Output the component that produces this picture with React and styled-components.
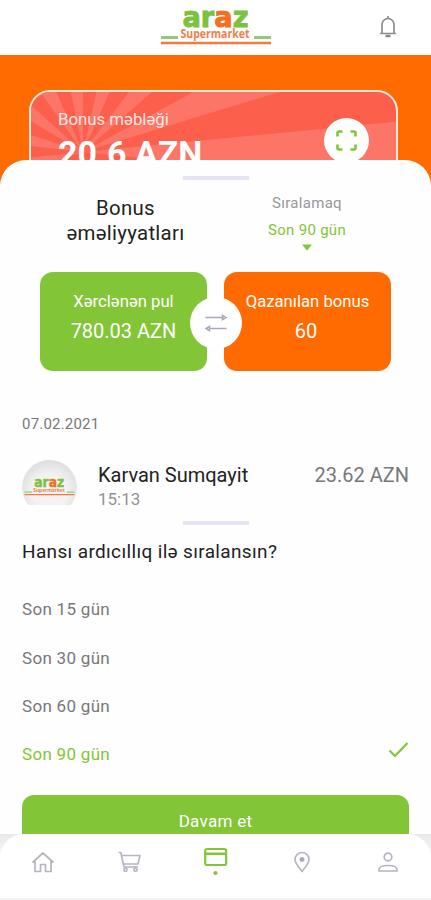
import React from "react";
import styled, { createGlobalStyle } from "styled-components";

const GREEN = "#82c536";
const ORANGE = "#ff6b00";

const GlobalStyle = createGlobalStyle`
  * {
    box-sizing: border-box;
  }

  body {
    margin: 0;
    background-color: #fff;
    font-family: Roboto, "Liberation Sans", sans-serif;
  }
`;

const Screen = styled.div`
  width: 431px;
  height: 900px;
  display: flex;
  flex-direction: column;
  background-color: #fefefe;
  overflow: hidden;
`;

const Header = styled.header`
  height: 55px;
  flex-shrink: 0;
  display: grid;
  grid-template-columns: 1fr 112px 1fr;
  align-items: start;
  background-color: #fff;

  .logo {
    grid-column: 2;
  }

  .bell {
    justify-self: end;
    margin: 15px 33px 0 0;
  }
`;

const Hero = styled.section`
  height: 145px;
  flex-shrink: 0;
  padding: 35px 33px 0 29px;
  background-color: ${ORANGE};
`;

const BonusCard = styled.div`
  position: relative;
  height: 110px;
  display: flex;
  justify-content: space-between;
  padding: 17px 27px 0 27px;
  border: 2px solid #ffe9dc;
  border-radius: 21px;
  color: #fff;
  background-color: #fc5f4b;
  overflow: hidden;

  .rays {
    position: absolute;
    top: 0;
    left: 0;
  }
`;

const BonusText = styled.div`
  position: relative;
  display: flex;
  flex-direction: column;

  .label {
    font-size: 16.8px;
    line-height: 20px;
    color: #ffe6e1;
  }

  .amount {
    margin-top: 5px;
    font-size: 34px;
    font-weight: 700;
    line-height: 38px;
  }
`;

const ScanButton = styled.div`
  position: relative;
  width: 45px;
  height: 45px;
  margin-top: 9px;
  display: flex;
  align-items: center;
  justify-content: center;
  border-radius: 50%;
  background-color: #fff;
`;

const Sheet = styled.main`
  position: relative;
  flex: 1;
  min-height: 0;
  margin-top: -40px;
  padding-top: 16px;
  display: flex;
  flex-direction: column;
  border-radius: 26px 26px 0 0;
  background-color: #fefefe;
`;

const Handle = styled.div`
  width: 66px;
  height: 4px;
  flex-shrink: 0;
  margin: ${(props) => props.$top || 0}px auto 0;
  background-color: #e4e4f3;
`;

const Summary = styled.div`
  display: grid;
  grid-template-columns: 166px 166px;
  column-gap: 17px;
  justify-content: center;
  height: 92px;
  flex-shrink: 0;
  padding-top: 15px;
  text-align: center;
`;

const Title = styled.h1`
  margin: 0;
  padding: 1px 0 0 3px;
  font-size: 20.4px;
  font-weight: 400;
  line-height: 25px;
  letter-spacing: 0.3px;
  color: #222;
`;

const Sort = styled.div`
  display: flex;
  flex-direction: column;
  align-items: center;
  font-size: 15px;
  letter-spacing: 0.3px;
  color: #97979b;

  .label {
    line-height: 18px;
    margin-top: -1px;
  }

  .value {
    margin-top: 8px;
    line-height: 20px;
    color: ${GREEN};
  }

  svg {
    margin-top: 4px;
  }
`;

const Totals = styled.div`
  position: relative;
  display: grid;
  grid-template-columns: 167px 167px;
  column-gap: 17px;
  justify-content: center;
`;

const Total = styled.div`
  height: 99px;
  display: flex;
  flex-direction: column;
  align-items: center;
  padding-top: 20px;
  border-radius: 13px;
  color: #fff;
  background-color: ${(props) => props.color};

  .label {
    font-size: 16.7px;
    line-height: 20px;
  }

  .value {
    margin-top: 7px;
    padding-right: ${(props) => props.$shift || 0}px;
    font-size: 20px;
    line-height: 24px;
  }
`;

const Swap = styled.div`
  position: absolute;
  top: 25px;
  left: 190px;
  width: 52px;
  height: 52px;
  display: flex;
  align-items: center;
  justify-content: center;
  border-radius: 50%;
  background-color: #fff;
`;

const DateLabel = styled.div`
  margin: 44px 0 0 22px;
  font-size: 15px;
  line-height: 18px;
  letter-spacing: 0.2px;
  color: #77777a;
`;

const Operation = styled.div`
  height: 46px;
  flex-shrink: 0;
  margin: 27px 22px 0;
  display: flex;
  align-items: flex-start;

  .info {
    flex: 1;
    margin: 3px 0 0 21px;
  }

  .store {
    font-size: 20px;
    line-height: 24px;
    color: #222;
  }

  .time {
    font-size: 17px;
    line-height: 24px;
    color: #929296;
  }

  .price {
    margin-top: 3px;
    font-size: 20px;
    line-height: 24px;
    color: #77777a;
  }
`;

const Avatar = styled.div`
  width: 55px;
  height: 45px;
  overflow: hidden;

  div {
    width: 55px;
    height: 55px;
    padding: 15px 2px 0;
    border-radius: 50%;
    background: radial-gradient(circle at 50% 58%, #f3f3f3 40%, #dcdcdc 78%);
  }

  svg {
    display: block;
  }
`;

const Question = styled.h2`
  margin: 15px 0 0 22px;
  font-size: 19px;
  font-weight: 400;
  line-height: 24px;
  letter-spacing: 0.35px;
  color: #222;
`;

const Options = styled.ul`
  margin: 21px 0 0;
  padding: 0 22px;
  list-style: none;
`;

const Option = styled.li`
  height: 48.4px;
  display: flex;
  align-items: center;
  justify-content: space-between;
  font-size: 17px;
  letter-spacing: 0.3px;
  color: ${(props) => (props.$selected ? GREEN : "#77777a")};

  svg {
    margin-top: -9px;
  }
`;

const Submit = styled.button`
  width: 387px;
  height: 50px;
  flex-shrink: 0;
  margin: 16px auto 0;
  padding: 2px 0 0;
  border: 0;
  border-radius: 12px;
  font-family: inherit;
  font-size: 17px;
  letter-spacing: 0.3px;
  color: #fff;
  background-color: ${GREEN};
`;

const BottomBar = styled.nav`
  position: relative;
  height: 66px;
  flex-shrink: 0;
  background: linear-gradient(#e9e9ea, #f8f8f8 22px);
`;

const Tabs = styled.div`
  height: 65px;
  display: grid;
  grid-template-columns: repeat(5, 1fr);
  justify-items: center;
  align-items: start;
  padding-top: 13px;
  border-radius: 24px 24px 0 0;
  border-bottom: 1px solid #f1f1f1;
  background-color: #fff;
`;

const Logo = ({ width, height, className }) => (
  <svg
    className={className}
    width={width}
    height={height}
    viewBox="0 -6 112 46"
    overflow="visible"
  >
    <text
      x="22.500"
      y="20.500"
      textLength="66"
      lengthAdjust="spacingAndGlyphs"
      fontFamily="DejaVu Sans, sans-serif"
      fontWeight="700"
      fontSize="29"
      fill="#7cc142"
      stroke="#7cc142"
      strokeWidth="1"
    >
      ar<tspan fill="#f37021" stroke="#f37021">a</tspan>z
    </text>
    <text
      x="20.500"
      y="31.500"
      textLength="69"
      lengthAdjust="spacingAndGlyphs"
      fontFamily="Open Sans, sans-serif"
      fontWeight="700"
      fontSize="11.500"
      fill="#f0804a"
    >
      Supermarket
    </text>
    <path d="M1 31.500h17M94 31.500h17" stroke="#93c97a" strokeWidth="3" />
    <path d="M1 37h110" stroke="#f27a3c" strokeWidth="2.400" />
  </svg>
);

const rayAngles = [-6, 17, 41, 66, 90, 114, 138, 162, 186];

const rayPoints = (angle) => {
  const cx = 52;
  const cy = 60;
  const point = (deg) => {
    const rad = (deg * Math.PI) / 180;
    return `${cx + 600 * Math.cos(rad)},${cy - 600 * Math.sin(rad)}`;
  };
  return `${cx},${cy} ${point(angle)} ${point(angle + 11.5)}`;
};

const Rays = () => (
  <svg className="rays" width="366" height="108">
    {rayAngles.map((angle) => (
      <polygon key={angle} points={rayPoints(angle)} fill="#fd7566" />
    ))}
  </svg>
);

const BellIcon = () => (
  <svg
    className="bell"
    width="20"
    height="24"
    viewBox="0 0 20 24"
    fill="none"
    stroke="#8d8d90"
    strokeWidth="1.700"
  >
    <path d="M2 18.500h16M4 18V9.500a6 6 0 0 1 12 0V18M10 1v2.500" />
    <path d="M8.300 20.500h3.400v.8h-3.400z" />
  </svg>
);

const ScanIcon = () => (
  <svg width="21" height="21" fill="none" stroke={GREEN} strokeWidth="2.600">
    <path d="M1.500 6.500V3q0-1.500 1.500-1.500h3.500M14.500 1.500H18q1.500 0 1.500 1.500v3.500M19.500 14.500V18q0 1.500-1.500 1.500h-3.500M6.500 19.500H3q-1.500 0-1.500-1.500v-3.500" />
  </svg>
);

const SwapIcon = () => (
  <svg width="24" height="18" fill="none" stroke="#a9a9bd" strokeWidth="1.500">
    <path d="M1.500 3.500h18M18.500 1.300L22 3.500l-3.500 2.200zM22.500 14.500H5M5.500 12.300L2 14.500l3.500 2.200z" />
  </svg>
);

const iconProps = {
  width: 26,
  height: 30,
  viewBox: "0 0 26 30",
  fill: "none",
  stroke: "#b4b6c2",
  strokeWidth: 1.7,
  strokeLinejoin: "round",
};

const HomeIcon = () => (
  <svg {...iconProps}>
    <path d="M2.500 15.500L13 6l10.500 9.500M5 13.500v11h5.500v-7h5v7H21v-11" />
  </svg>
);

const CartIcon = () => (
  <svg {...iconProps}>
    <path d="M2.500 5.500h2.300l3.200 14.500h14M5.500 8.500H24l-2 8.500H7.200" />
    <circle cx="9.500" cy="22.800" r="1.600" />
    <circle cx="19.500" cy="22.800" r="1.600" />
  </svg>
);

const CardIcon = () => (
  <svg {...iconProps} stroke={GREEN} strokeWidth="2.200">
    <rect x="3.200" y="2" width="21" height="16" rx="2" />
    <path d="M3 6.800H24" strokeWidth="2.600" />
    <circle cx="13.500" cy="26" r="2.100" fill={GREEN} stroke="none" />
  </svg>
);

const PinIcon = () => (
  <svg {...iconProps}>
    <path d="M13 24.500c-4-5-7-8.500-7-12a7 7 0 0 1 14 0c0 3.500-3 7-7 12z" />
    <circle cx="13" cy="12.500" r="2.200" fill="#a5a7b5" strokeWidth="0.800" />
  </svg>
);

const UserIcon = () => (
  <svg {...iconProps}>
    <circle cx="13" cy="10" r="3.800" />
    <path d="M4 24v-1.500q0-4 9-4t9 4V24z" />
  </svg>
);

const options = ["Son 15 gün", "Son 30 gün", "Son 60 gün", "Son 90 gün"];
const selected = "Son 90 gün";

const App = () => {
  return (
    <>
      <GlobalStyle />
      <Screen>
        <Header>
          <Logo className="logo" width={112} height={46} />
          <BellIcon />
        </Header>
        <Hero>
          <BonusCard>
            <Rays />
            <BonusText>
              <span className="label">Bonus məbləği</span>
              <span className="amount">20.6 AZN</span>
            </BonusText>
            <ScanButton>
              <ScanIcon />
            </ScanButton>
          </BonusCard>
        </Hero>
        <Sheet>
          <Handle />
          <Summary>
            <Title>
              Bonus
              <br />
              əməliyyatları
            </Title>
            <Sort>
              <span className="label">Sıralamaq</span>
              <span className="value">{selected}</span>
              <svg width="10" height="7">
                <path d="M0 .5h10L5 6.500z" fill={GREEN} />
              </svg>
            </Sort>
          </Summary>
          <Totals>
            <Total color={GREEN}>
              <span className="label">Xərclənən pul</span>
              <span className="value">780.03 AZN</span>
            </Total>
            <Total color={ORANGE} $shift={3}>
              <span className="label">Qazanılan bonus</span>
              <span className="value">60</span>
            </Total>
            <Swap>
              <SwapIcon />
            </Swap>
          </Totals>
          <DateLabel>07.02.2021</DateLabel>
          <Operation>
            <Avatar>
              <div>
                <Logo width={51} height={21} />
              </div>
            </Avatar>
            <div className="info">
              <div className="store">Karvan Sumqayit</div>
              <div className="time">15:13</div>
            </div>
            <div className="price">23.62 AZN</div>
          </Operation>
          <Handle $top={15} />
          <Question>Hansı ardıcıllıq ilə sıralansın?</Question>
          <Options>
            {options.map((option) => (
              <Option key={option} $selected={option === selected}>
                {option}
                {option === selected && (
                  <svg width="21" height="17" fill="none">
                    <path
                      d="M1.500 9.500L7 15 19.500 2"
                      stroke={GREEN}
                      strokeWidth="2.200"
                    />
                  </svg>
                )}
              </Option>
            ))}
          </Options>
          <Submit>Davam et</Submit>
        </Sheet>
        <BottomBar>
          <Tabs>
            <HomeIcon />
            <CartIcon />
            <CardIcon />
            <PinIcon />
            <UserIcon />
          </Tabs>
        </BottomBar>
      </Screen>
    </>
  );
};

export default App;
